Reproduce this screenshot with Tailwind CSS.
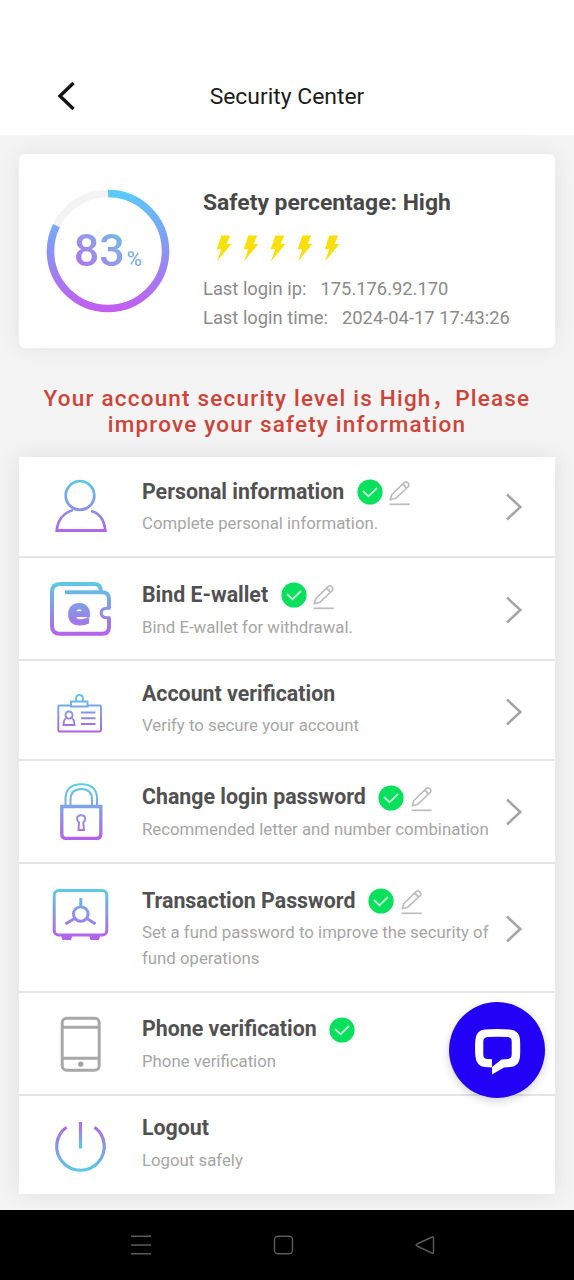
<!DOCTYPE html>
<html lang="en">
<head>
<meta charset="utf-8">
<title>Security Center</title>
<script src="https://cdn.jsdelivr.net/npm/@tailwindcss/browser@4"></script>
</head>
<body class="w-[574px] h-[1280px] overflow-hidden bg-[#f4f4f4] font-[Roboto,'Noto_Sans_CJK_SC',sans-serif] flex flex-col">
<svg class="absolute w-0 h-0">
  <defs>
    <symbol id="check" viewBox="0 0 26 26"><circle cx="13" cy="13" r="12.6" fill="#06e05c"/><path d="M6 12L11.500 17.300L20 9" fill="none" stroke="#c9f9da" stroke-width="1.8"/></symbol>
    <symbol id="edit" viewBox="0 0 22 26"><g fill="none" stroke="#bdbdbd" stroke-width="1.7" stroke-linejoin="round"><path d="M1.300 19.700L2.900 14.500L14.800 2.900Q17 1 19 3Q20.800 5.200 18.800 7L6.900 18.200ZM13.300 4.400Q15.800 5 17.200 8.400"/><path d="M.5 24.300H20.700"/></g></symbol>
    <symbol id="arrow" viewBox="0 0 18 30"><path d="M2 2.5L15.3 15L2 27.5" fill="none" stroke="#a5a5a5" stroke-width="2.6"/></symbol>
    <symbol id="bolt" viewBox="0 0 16 28"><path d="M5.300 1.500H14.300L10.600 10H15.500L1 27.300L5.300 15.300H.8Z" fill="#f9df0c"/></symbol>
  </defs>
</svg>

<header class="h-[135px] shrink-0 bg-white pt-[58px]">
  <div class="h-[76px] grid grid-cols-[57px_1fr_57px] items-center">
    <svg class="w-[20px] h-[30px] ml-[56px]" viewBox="56 81 20 30"><path d="M73.5 83L60 96L73.500 109" fill="none" stroke="#151515" stroke-width="3.400"/></svg>
    <h1 class="mt-[2px] text-center text-[22.900px] leading-[30px] text-[#1b1b1b]">Security Center</h1>
  </div>
</header>

<section class="mx-[19px] mt-[19px] h-[194px] shrink-0 bg-white rounded-[6px] shadow-[0_0_24px_rgba(0,0,0,0.07)] flex">
  <div class="ml-[27px] mt-[35px] w-[124px] h-[124px] grid">
    <svg class="col-start-1 row-start-1 w-[124px] h-[124px]" viewBox="0 0 124 124">
      <defs><linearGradient id="ring" gradientUnits="userSpaceOnUse" x1="124" y1="0" x2="0" y2="0"><stop offset="0" stop-color="#56cdfa"/><stop offset=".5" stop-color="#8c92f5"/><stop offset="1" stop-color="#c55bf0"/></linearGradient></defs>
      <circle cx="62" cy="62" r="57.500" fill="none" stroke="#f3f3f3" stroke-width="7.500"/>
      <circle cx="62" cy="62" r="57.500" fill="none" stroke="url(#ring)" stroke-width="7.500" pathLength="100" stroke-dasharray="82.300 100" transform="rotate(-90 62 62)"/>
    </svg>
    <div class="col-start-1 row-start-1 self-center justify-self-center mt-[8px] flex items-baseline font-medium leading-[50px] text-transparent bg-clip-text bg-linear-to-tr from-[#ad6ceb] from-15% to-[#5cc4e0] to-85%"><span class="text-[45px]">83</span><span class="text-[21px] ml-[2px]">%</span></div>
  </div>
  <div class="ml-[33px] pt-[34px]">
    <h2 class="text-[22.900px] leading-[30px] font-bold text-[#484848]">Safety percentage: High</h2>
    <div class="flex gap-[11px] ml-[13px] mt-[16px] h-[28px]">
      <svg class="w-[16px] h-[28px]"><use href="#bolt"/></svg>
      <svg class="w-[16px] h-[28px]"><use href="#bolt"/></svg>
      <svg class="w-[16px] h-[28px]"><use href="#bolt"/></svg>
      <svg class="w-[16px] h-[28px]"><use href="#bolt"/></svg>
      <svg class="w-[16px] h-[28px]"><use href="#bolt"/></svg>
    </div>
    <div class="mt-[12px] text-[18.350px] leading-[29px] text-[#8b8b8b]">
      <p>Last login ip:<span class="ml-[14px]">175.176.92.170</span></p>
      <p>Last login time:<span class="ml-[14px]">2024-04-17 17:43:26</span></p>
    </div>
  </div>
</section>

<div class="mt-[37px] h-[72px] shrink-0 text-center text-[22.500px] leading-[26px] font-medium tracking-[1.200px] text-[#cf4237]">Your account security level is High，Please<br>improve your safety information</div>

<main class="mx-[19px] h-[737px] shrink-0 bg-white shadow-[0_0_24px_rgba(0,0,0,0.09)]">
  <div class="h-[101px] border-b-2 border-[#e4e4e4] flex pl-[26px] pr-[32px]">
    <svg class="w-[70px] h-[101px]" viewBox="45 457 70 101"><defs><linearGradient id="g1" gradientUnits="userSpaceOnUse" x1="0" y1="480" x2="0" y2="532"><stop stop-color="#5ccbe4"/><stop offset="1" stop-color="#b264e8"/></linearGradient></defs><g fill="none" stroke="url(#g1)" stroke-width="2.800"><circle cx="80" cy="495.500" r="14.300"/><path d="M73 510C63 513 57.500 521 56.800 530.500H105.300C104.300 520 99 513 91 511"/></g></svg>
    <div class="ml-[27px] w-[350px] pt-[20px]">
      <div class="flex items-center h-[28px]"><h3 class="mt-[2px] text-[21.350px] leading-[28px] font-bold text-[#515151]">Personal information</h3><svg class="w-[26px] h-[26px] ml-[12.500px] mt-[1px]"><use href="#check"/></svg><svg class="w-[22px] h-[26px] ml-[6.500px] mt-[4px]"><use href="#edit"/></svg></div>
      <p class="mt-[6px] text-[16.800px] leading-[25.500px] text-[#a6a6a6]">Complete personal information.</p>
    </div>
    <svg class="w-[18px] h-[30px] ml-[13px] self-center"><use href="#arrow"/></svg>
  </div>
  <div class="h-[103px] border-b-2 border-[#e4e4e4] flex pl-[26px] pr-[32px]">
    <svg class="w-[70px] h-[103px]" viewBox="45 558 70 103"><defs><linearGradient id="g2" gradientUnits="userSpaceOnUse" x1="0" y1="582" x2="0" y2="636"><stop stop-color="#5ccbe4"/><stop offset="1" stop-color="#b75fea"/></linearGradient></defs><g fill="none" stroke="url(#g2)" stroke-width="4"><path d="M65 592.300H102Q109 592.300 109 599V608M109 618V627Q109 633.800 102 633.800H60Q52 633.800 52 626V592Q52 584 60 584H94Q101 584 101 591.500"/><path d="M110.500 608.300H106Q101.200 609 101.200 613Q101.200 617 106 617.700H110.500" stroke-width="3"/></g><text x="79" y="623.500" text-anchor="middle" textLength="23" lengthAdjust="spacingAndGlyphs" font-family="DejaVu Sans" font-weight="700" font-size="36" fill="url(#g2)" stroke="url(#g2)" stroke-width="2">e</text></svg>
    <div class="ml-[27px] w-[350px] pt-[22px]">
      <div class="flex items-center h-[28px]"><h3 class="mt-[2px] text-[21.350px] leading-[28px] font-bold text-[#515151]">Bind E-wallet</h3><svg class="w-[26px] h-[26px] ml-[12.500px] mt-[2px]"><use href="#check"/></svg><svg class="w-[22px] h-[26px] ml-[6.500px] mt-[5px]"><use href="#edit"/></svg></div>
      <p class="mt-[7px] text-[16.800px] leading-[25.500px] text-[#a6a6a6]">Bind E-wallet for withdrawal.</p>
    </div>
    <svg class="w-[18px] h-[30px] ml-[13px] mt-[2px] self-center"><use href="#arrow"/></svg>
  </div>
  <div class="h-[100px] border-b-2 border-[#e4e4e4] flex pl-[26px] pr-[32px]">
    <svg class="w-[70px] h-[100px]" viewBox="45 661 70 100"><defs><linearGradient id="g3" gradientUnits="userSpaceOnUse" x1="0" y1="694" x2="0" y2="732"><stop stop-color="#5ccbe8"/><stop offset="1" stop-color="#b25fe0"/></linearGradient></defs><g fill="none" stroke="url(#g3)" stroke-width="1.900"><path d="M71 705.500H60Q58.300 705.500 58.300 707V730Q58.300 731.500 60 731.500H99.500Q101 731.500 101 730V707Q101 705.500 99.500 705.500H87.500"/><path d="M71 701.500H87.500V706.500H71ZM76 701.500V699Q76 695 79.500 695Q83 695 83 699V701.500"/><circle cx="69" cy="715" r="3.500"/><path d="M66.500 718Q63.500 719.500 63.500 725H74.500Q74.500 719.500 71.500 718M81 712.500H95.500M81 718.300H95.500M81 724H95.500"/></g></svg>
    <div class="ml-[27px] w-[350px] pt-[18px]">
      <div class="flex items-center h-[28px]"><h3 class="mt-[2px] text-[21.350px] leading-[28px] font-bold text-[#515151]">Account verification</h3></div>
      <p class="mt-[6px] text-[16.800px] leading-[25.500px] text-[#a6a6a6]">Verify to secure your account</p>
    </div>
    <svg class="w-[18px] h-[30px] ml-[13px] mt-[3px] self-center"><use href="#arrow"/></svg>
  </div>
  <div class="h-[103px] border-b-2 border-[#e4e4e4] flex pl-[26px] pr-[32px]">
    <svg class="w-[70px] h-[103px]" viewBox="45 761 70 103"><defs><linearGradient id="g4" gradientUnits="userSpaceOnUse" x1="0" y1="784" x2="0" y2="840"><stop stop-color="#5ccfe6"/><stop offset="1" stop-color="#b65fe9"/></linearGradient></defs><g fill="none" stroke="url(#g4)" stroke-width="2"><path d="M65.500 806V799Q65.500 784.300 81.300 784.300Q97 784.300 97 799V806M70.500 806V800Q70.500 789 81.300 789Q92 789 92 800V806"/><path d="M61.800 806.500H100.800V834Q100.800 838.400 96.500 838.400H66Q61.800 838.400 61.800 834Z" stroke-width="3.300"/><path d="M79 822.500Q77 821 77 818.800Q77 815.200 81.200 815.200Q85.200 815.200 85.200 818.800Q85.200 821 83.300 822.500L84 830H78.500Z" stroke-width="1.900"/></g></svg>
    <div class="ml-[27px] w-[350px] pt-[22px]">
      <div class="flex items-center h-[28px]"><h3 class="text-[21.350px] leading-[28px] font-bold text-[#515151]">Change login password</h3><svg class="w-[26px] h-[26px] ml-[12.500px] mt-[1px]"><use href="#check"/></svg><svg class="w-[22px] h-[26px] ml-[7px] mt-[3px]"><use href="#edit"/></svg></div>
      <p class="mt-[6px] text-[16.800px] leading-[25.500px] whitespace-nowrap text-[#a6a6a6]">Recommended letter and number combination</p>
    </div>
    <svg class="w-[18px] h-[30px] ml-[13px] mt-[1px] self-center"><use href="#arrow"/></svg>
  </div>
  <div class="h-[129px] border-b-2 border-[#e4e4e4] flex pl-[26px] pr-[32px]">
    <svg class="w-[70px] h-[129px]" viewBox="45 864 70 129"><defs><linearGradient id="g5" gradientUnits="userSpaceOnUse" x1="0" y1="889" x2="0" y2="940"><stop stop-color="#5ccbe4"/><stop offset="1" stop-color="#b95eea"/></linearGradient></defs><g fill="none" stroke="url(#g5)" stroke-width="3"><rect x="54.200" y="890.500" width="52.600" height="44.500" rx="4.500"/><circle cx="80.800" cy="914" r="7.300"/><path d="M80.800 906.500V898M74.500 918.500L65.500 924M87 918.500L95.500 924"/></g><path d="M61 935H72.500L71 940H62.500ZM89 935H100.500L99 940H90.500Z" fill="url(#g5)"/></svg>
    <div class="ml-[27px] w-[350px] pt-[22px]">
      <div class="flex items-center h-[28px]"><h3 class="mt-[2px] text-[21.350px] leading-[28px] font-bold text-[#515151]">Transaction Password</h3><svg class="w-[26px] h-[26px] ml-[12.500px] mt-[1px]"><use href="#check"/></svg><svg class="w-[22px] h-[26px] ml-[7px] mt-[4px]"><use href="#edit"/></svg></div>
      <p class="mt-[6px] text-[16.800px] leading-[25.500px] text-[#a6a6a6]">Set a fund password to improve the security of fund operations</p>
    </div>
    <svg class="w-[18px] h-[30px] ml-[13px] mt-[2px] self-center"><use href="#arrow"/></svg>
  </div>
  <div class="h-[103px] border-b-2 border-[#e4e4e4] flex pl-[26px] pr-[32px]">
    <svg class="w-[70px] h-[103px]" viewBox="45 993 70 103"><g fill="none" stroke="#a7a9a9" stroke-width="3"><rect x="62.200" y="1018.300" width="37" height="52" rx="4.500"/><path d="M62 1027.200H99M62 1058.300H99"/></g><circle cx="80.700" cy="1064.200" r="2.600" fill="#a0a2a2"/></svg>
    <div class="ml-[27px] w-[350px] pt-[22px]">
      <div class="flex items-center h-[28px]"><h3 class="text-[21.350px] leading-[28px] font-bold text-[#515151]">Phone verification</h3><svg class="w-[26px] h-[26px] ml-[12.500px] mt-[1px]"><use href="#check"/></svg></div>
      <p class="mt-[6px] text-[16.800px] leading-[25.500px] text-[#a6a6a6]">Phone verification</p>
    </div>
  </div>
  <div class="h-[98px] flex pl-[26px] pr-[32px]">
    <svg class="w-[70px] h-[98px]" viewBox="45 1096 70 98"><defs><linearGradient id="g7" gradientUnits="userSpaceOnUse" x1="0" y1="1122" x2="0" y2="1172"><stop stop-color="#b667e0"/><stop offset=".45" stop-color="#8b93de"/><stop offset="1" stop-color="#5bcbe4"/></linearGradient><linearGradient id="g8" gradientUnits="userSpaceOnUse" x1="0" y1="1122" x2="0" y2="1148"><stop stop-color="#b667e0"/><stop offset="1" stop-color="#5bcbe4"/></linearGradient></defs><g fill="none" stroke-width="3.200"><path d="M66.500 1127.200A23.800 23.800 0 1 0 94.500 1127.200" stroke="url(#g7)"/><path d="M80.500 1122V1148.500" stroke="url(#g8)"/></g></svg>
    <div class="ml-[27px] w-[350px] pt-[17px]">
      <div class="flex items-center h-[28px]"><h3 class="mt-[2px] text-[21.350px] leading-[28px] font-bold text-[#515151]">Logout</h3></div>
      <p class="mt-[7px] text-[16.800px] leading-[25.500px] text-[#a6a6a6]">Logout safely</p>
    </div>
  </div>
</main>

<button class="absolute left-[449px] top-[1002px] w-[96px] h-[96px] rounded-full bg-[#2100f5] shadow-[0_3px_8px_rgba(0,0,0,0.18)]" aria-label="Chat">
  <svg class="w-[96px] h-[96px]" viewBox="449 1002 96 96"><path fill="#fff" fill-rule="evenodd" d="M485 1029.500Q497 1028.500 509.500 1029.500Q519 1030 520 1039Q520.500 1049 520 1057Q519 1066.500 510.500 1067L504 1067.500L492 1074.500V1067.500L485 1067Q476.500 1066.500 475.500 1057Q474.500 1048 475.500 1039Q476.500 1030 485 1029.500ZM487.500 1037Q483.500 1037.500 483.300 1041V1055Q483.500 1058.800 487.500 1059L492 1059.300V1067L501.500 1059.500L508 1059Q511.500 1058.500 511.700 1055V1041Q511.500 1037.500 508 1037Q498 1036.300 487.500 1037Z"/></svg>
</button>

<nav class="mt-auto h-[70px] shrink-0 bg-black">
  <svg class="w-[574px] h-[70px]" viewBox="0 1210 574 70" fill="none" stroke="#5c5c5c" stroke-width="1.400" stroke-linejoin="round"><path d="M131 1236.200H151M131 1245H151M131 1253.700H151"/><rect x="274.500" y="1236.200" width="18" height="17.500" rx="3.500"/><path d="M432.200 1237Q433.500 1236.300 433.500 1238V1252Q433.500 1254 432 1253.200L417 1246Q415.300 1245 417 1244Z"/></svg>
</nav>
</body>
</html>
